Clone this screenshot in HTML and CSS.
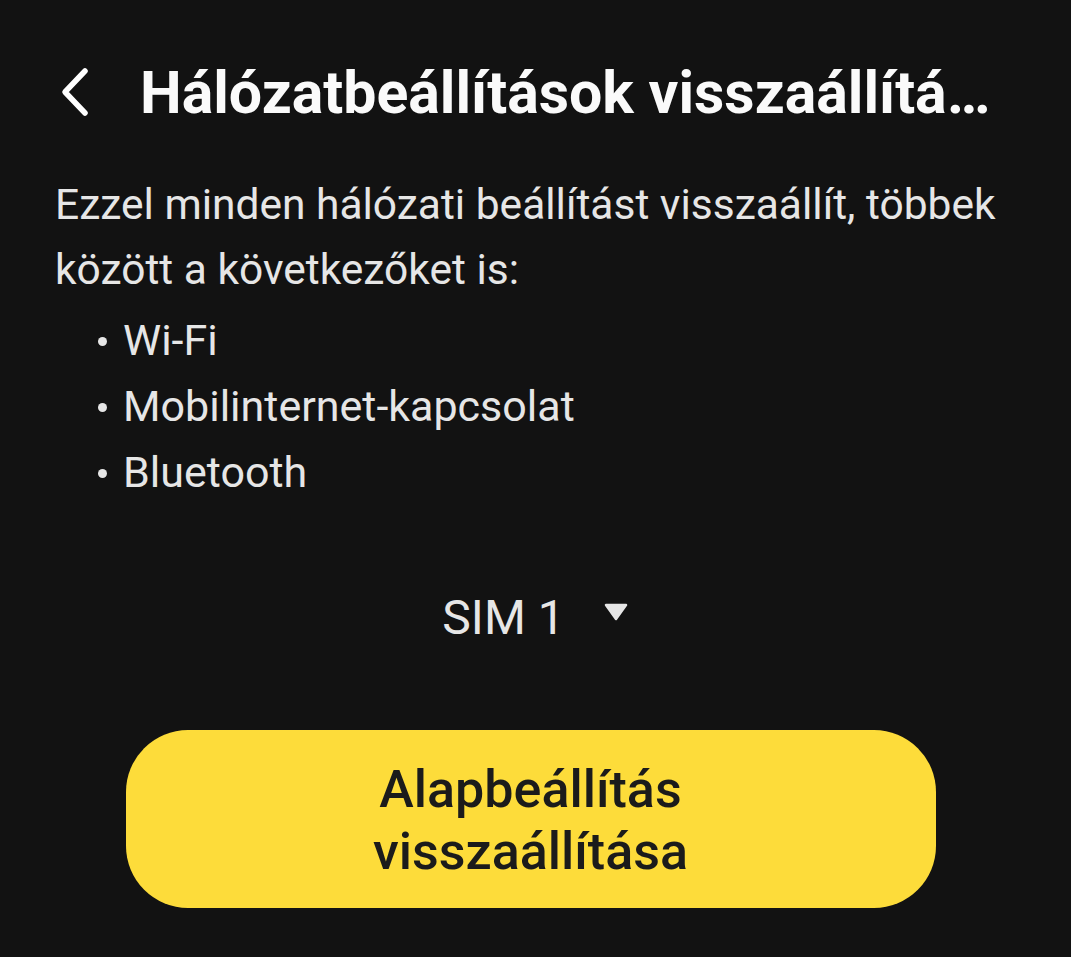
FILE: index.html
```html
<!DOCTYPE html>
<html lang="hu">
<head>
<meta charset="utf-8">
<link rel="stylesheet" href="styles.css">
</head>
<body>
<div class="screen">
  <header class="appbar">
    <span class="back">
      <svg width="34" height="50" viewBox="0 0 34 50"><path d="M27 4 L7 25 L27 46" fill="none" stroke="#fff" stroke-width="5.5" stroke-linecap="round" stroke-linejoin="round"/></svg>
    </span>
    <h1 class="title">Hálózatbeállítások visszaállítása</h1>
  </header>
  <p class="desc">Ezzel minden hálózati beállítást visszaállít, többek között a következőket is:</p>
  <ul class="list">
    <li>Wi-Fi</li>
    <li>Mobilinternet-kapcsolat</li>
    <li>Bluetooth</li>
  </ul>
  <div class="sim">
    <span class="sim-label">SIM 1</span>
    <svg class="caret" width="26" height="20" viewBox="0 0 26 20"><path d="M3 3 L23 3 L13 17 Z" fill="#e6e6e6" stroke="#e6e6e6" stroke-width="2.5" stroke-linejoin="round"/></svg>
  </div>
  <div class="actions">
    <button class="reset">Alapbeállítás<br>visszaállítása</button>
  </div>
</div>
</body>
</html>
```

FILE: styles.css
```css
html, body {
  margin: 0;
  padding: 0;
  background: #121212;
}
body {
  font-family: Roboto, "Noto Sans", sans-serif;
  color: #e8e8e8;
}
.screen {
  width: 1071px;
  height: 957px;
  box-sizing: border-box;
  padding: 0 55px;
  overflow: hidden;
}
.appbar {
  display: flex;
  align-items: center;
  height: 70px;
  margin-top: 57px;
  padding-right: 20px;
}
.back {
  display: flex;
  width: 82px;
  padding-left: 3px;
  flex: none;
}
.title {
  margin: 0;
  font-size: 59px;
  font-weight: 700;
  color: #fafafa;
  white-space: nowrap;
  overflow: hidden;
  text-overflow: ellipsis;
  flex: 1;
  min-width: 0;
}
.desc {
  margin: 45px 0 0;
  font-size: 42.5px;
  line-height: 65px;
  color: #e6e6e6;
}
.list {
  list-style: none;
  margin: 5px 0 0;
  padding: 0 0 0 43px;
  font-size: 43px;
  color: #e6e6e6;
}
.list li {
  display: flex;
  align-items: center;
  height: 66px;
}
.list li::before {
  content: "";
  width: 9px;
  height: 9px;
  border-radius: 50%;
  background: #e6e6e6;
  margin-right: 16px;
  margin-top: 2px;
}
.sim {
  display: flex;
  justify-content: center;
  align-items: center;
  gap: 38px;
  margin-top: 84px;
  height: 56px;
}
.sim-label {
  font-size: 48px;
  color: #e6e6e6;
}
.caret {
  margin-top: -10px;
}
.actions {
  display: flex;
  justify-content: center;
  margin-top: 85px;
  padding-right: 10px;
}
.reset {
  width: 810px;
  height: 178px;
  border: none;
  border-radius: 62px;
  background: #fddc3a;
  color: #1b1b1b;
  font-family: Roboto, "Noto Sans", sans-serif;
  font-size: 52px;
  font-weight: 500;
  line-height: 62px;
  padding-top: 4px;
}
```
